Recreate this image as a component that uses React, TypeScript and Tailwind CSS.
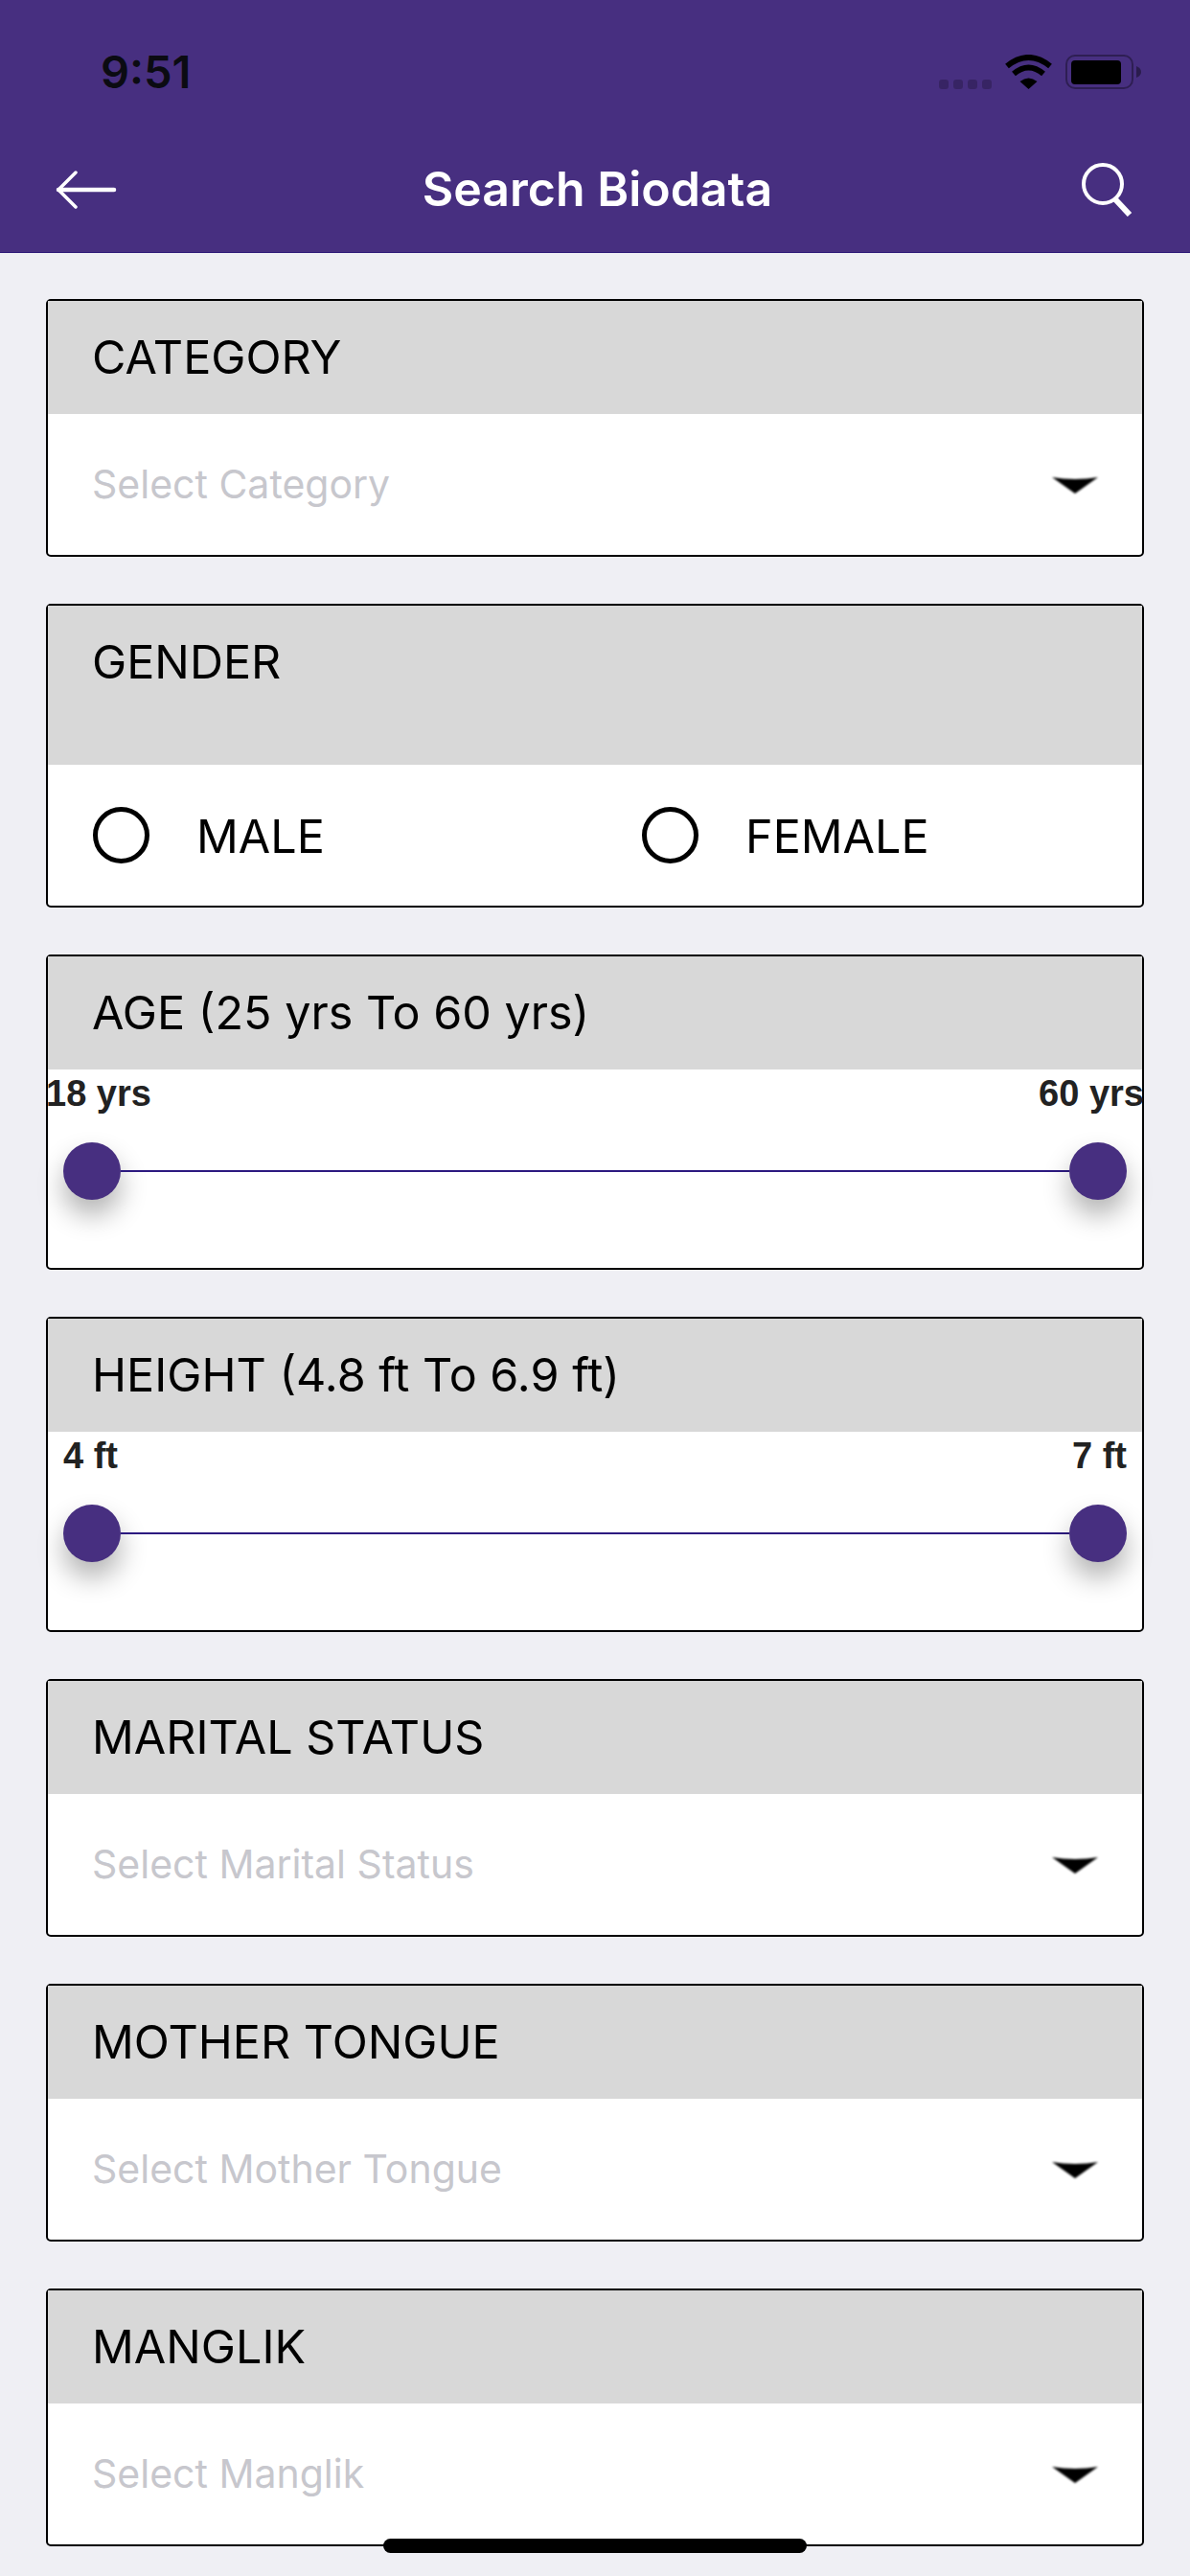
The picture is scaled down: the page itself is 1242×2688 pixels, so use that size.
const font = "font-['Inter','Noto_Sans',sans-serif]";

function Card({ title, tall, children }: { title: string; tall?: boolean; children: React.ReactNode }) {
  return (
    <section className="rounded-[5px] border-2 border-black bg-white">
      <h2 className={`bg-[#d8d8d8] pl-[46px] text-[48.500px] font-normal leading-[118px] text-black ${tall ? "pb-[48px]" : ""}`}>
        {title}
      </h2>
      {children}
    </section>
  );
}

function SelectRow({ placeholder }: { placeholder: string }) {
  return (
    <div className="flex h-[147px] items-center justify-between pl-[46px] pr-[46px]">
      <span className="text-[41px] text-[#c7c7cd]">{placeholder}</span>
      <svg viewBox="0 0 48 20" width="48" height="20" className="blur-[1px]">
        <path d="M0 2 Q24 6 48 2 L24 19 Z" fill="#000" />
      </svg>
    </div>
  );
}

function Radio({ label, className }: { label: string; className: string }) {
  return (
    <div className={`flex items-center ${className}`}>
      <span className="h-[59px] w-[59px] rounded-full border-[5px] border-black" />
      <span className="ml-[49px] mt-[3px] text-[48.500px] text-black">{label}</span>
    </div>
  );
}

function RangeRow({ min, max, inset }: { min: string; max: string; inset: string }) {
  return (
    <div className="h-[207px] pt-[3px]">
      <div className={`flex justify-between font-['Liberation_Sans',sans-serif] text-[38px] font-bold leading-[44px] text-[#222] ${inset}`}>
        <span>{min}</span>
        <span>{max}</span>
      </div>
      <div className="mx-[16px] mt-[29px] flex items-center">
        <span className="h-[60px] w-[60px] rounded-full bg-[#472f80] shadow-[0_16px_28px_rgba(0,0,0,0.3)]" />
        <span className="h-[2px] flex-1 bg-[#2c1a80]" />
        <span className="h-[60px] w-[60px] rounded-full bg-[#472f80] shadow-[0_16px_28px_rgba(0,0,0,0.3)]" />
      </div>
    </div>
  );
}

export default function App() {
  return (
    <div className={`relative h-[2688px] w-[1242px] overflow-hidden bg-[#efeff4] ${font}`}>
      <header className="h-[264px] border-b border-[#2f1a78] bg-[#472f80]">
        <div className="flex h-[132px] items-start justify-between pl-[105px] pr-[51px] pt-[57px]">
          <span className="text-[47px] font-semibold leading-[36px] text-[#0b0b12]">9:51</span>
          <svg viewBox="0 0 211 36" width="211" height="36">
            <g fill="#000" fillOpacity="0.22">
              <rect x="0" y="26" width="10" height="10" rx="3" />
              <rect x="15" y="26" width="10" height="10" rx="3" />
              <rect x="30" y="26" width="10" height="10" rx="3" />
              <rect x="45" y="26" width="10" height="10" rx="3" />
            </g>
            <g fill="none" stroke="#000" strokeWidth="6">
              <path d="M71 12 Q93.500 -6 116 12" />
              <path d="M78 20 Q93.500 7 109 20" />
            </g>
            <path d="M84.500 28 Q93.500 21 102.500 28 L93.500 36 Z" fill="#000" />
            <rect x="133" y="1" width="69" height="34" rx="9" fill="none" stroke="#000" strokeOpacity="0.35" strokeWidth="2" />
            <rect x="138" y="6" width="52" height="25" rx="4" fill="#000" />
            <path d="M206 12 Q211 14 211 18 Q211 22 206 24 Z" fill="#000" fillOpacity="0.4" />
          </svg>
        </div>
        <div className="flex h-[131px] items-center justify-between pl-[58px] pr-[60px]">
          <svg viewBox="0 0 64 40" width="64" height="40" fill="none" stroke="#fff" strokeLinecap="round">
            <path d="M21 2 L3 20 L21 38" strokeWidth="3.500" strokeLinejoin="round" />
            <path d="M3 20 H61" strokeWidth="4.500" />
          </svg>
          <h1 className="-ml-[3px] text-[50px] font-semibold text-white">Search Biodata</h1>
          <svg viewBox="0 0 54 56" width="54" height="56" fill="none" stroke="#fff">
            <circle cx="23" cy="22" r="20" strokeWidth="4" />
            <path d="M36 38 L51 54" strokeWidth="6" />
          </svg>
        </div>
      </header>

      <main className="flex flex-col gap-[49px] px-[48px] pt-[48px]">
        <Card title="CATEGORY">
          <SelectRow placeholder="Select Category" />
        </Card>
        <Card title="GENDER" tall>
          <div className="flex h-[147px] items-center">
            <Radio label="MALE" className="w-[620px] pl-[47px]" />
            <Radio label="FEMALE" className="" />
          </div>
        </Card>
        <Card title="AGE (25 yrs To 60 yrs)">
          <RangeRow min="18 yrs" max="60 yrs" inset="-ml-[2px] -mr-[2px]" />
        </Card>
        <Card title="HEIGHT (4.8 ft To 6.9 ft)">
          <RangeRow min="4 ft" max="7 ft" inset="px-[16px]" />
        </Card>
        <Card title="MARITAL STATUS">
          <SelectRow placeholder="Select Marital Status" />
        </Card>
        <Card title="MOTHER TONGUE">
          <SelectRow placeholder="Select Mother Tongue" />
        </Card>
        <Card title="MANGLIK">
          <SelectRow placeholder="Select Manglik" />
        </Card>
      </main>

      <div className="absolute left-[400px] top-[2649px] h-[15px] w-[442px] rounded-full bg-black" />
    </div>
  );
}
